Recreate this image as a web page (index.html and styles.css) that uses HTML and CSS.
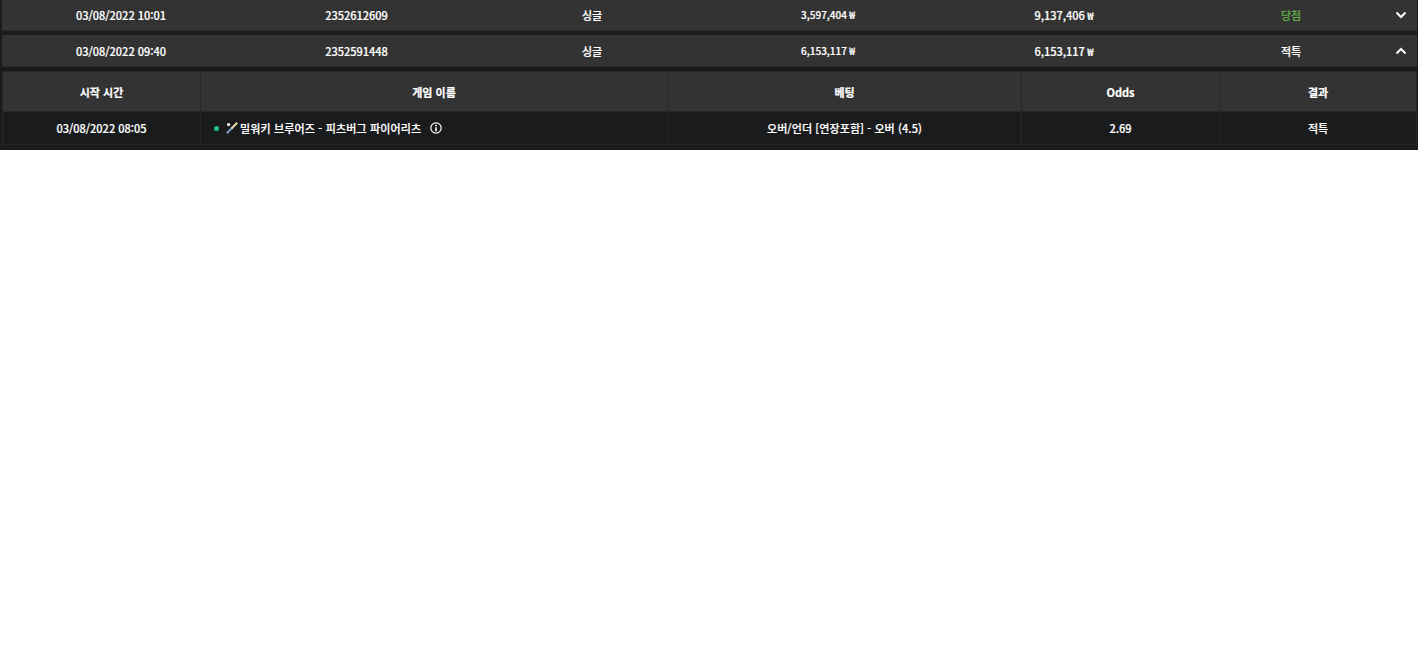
FILE: index.html
```html
<!DOCTYPE html>
<html lang="ko">
<head>
<meta charset="utf-8">
<title>베팅 내역</title>
<link rel="stylesheet" href="styles.css">
</head>
<body>
<div class="panel">
  <div class="row">
    <span class="cell">03/08/2022 10:01</span>
    <span class="cell">2352612609</span>
    <span class="cell">싱글</span>
    <span class="cell small">3,597,404 ₩</span>
    <span class="cell">9,137,406 ₩</span>
    <span class="cell win">당첨</span>
    <svg class="chev" width="12" height="8" viewBox="0 0 12 8"><path d="M1.5 1.5L6 6l4.5-4.5" fill="none" stroke="#fff" stroke-width="2"/></svg>
  </div>
  <div class="row">
    <span class="cell">03/08/2022 09:40</span>
    <span class="cell">2352591448</span>
    <span class="cell">싱글</span>
    <span class="cell small">6,153,117 ₩</span>
    <span class="cell">6,153,117 ₩</span>
    <span class="cell">적특</span>
    <svg class="chev" width="12" height="8" viewBox="0 0 12 8"><path d="M1.5 6.5L6 2l4.5 4.5" fill="none" stroke="#fff" stroke-width="2"/></svg>
  </div>
  <div class="detail">
    <div class="dhead">시작 시간</div>
    <div class="dhead">게임 이름</div>
    <div class="dhead">베팅</div>
    <div class="dhead">Odds</div>
    <div class="dhead">결과</div>
    <div class="dcell">03/08/2022 08:05</div>
    <div class="dcell game">
      <span class="dot"></span>
      <svg class="bat" width="12" height="12" viewBox="0 0 12 12"><path d="M0.8 11.2L6.5 5.5" stroke="#7d9cbc" stroke-width="2.2"/><path d="M5.5 6.5L11.2 0.8" stroke="#e8d9b0" stroke-width="2"/><circle cx="2.6" cy="2.6" r="1.7" fill="#e9e9e9"/></svg>
      <span class="gname">밀워키 브루어즈 - 피츠버그 파이어리츠</span>
      <svg class="info" width="12" height="12" viewBox="0 0 12 12"><circle cx="6" cy="6" r="5.2" fill="none" stroke="#fff" stroke-width="1.2"/><path d="M6 5.2V9.2" stroke="#fff" stroke-width="1.6"/><path d="M6 2.8v1.4" stroke="#fff" stroke-width="1.6"/></svg>
    </div>
    <div class="dcell wide">오버/언더 [연장포함] - 오버 (4.5)</div>
    <div class="dcell">2.69</div>
    <div class="dcell">적특</div>
  </div>
</div>
</body>
</html>
```
FILE: styles.css
```css
* { box-sizing: border-box; }
html, body { margin: 0; padding: 0; background: #fff; }
body {
  font-family: "Noto Sans CJK KR", "Noto Sans", sans-serif;
  font-size: 11px;
  font-weight: 500;
  color: #fff;
  -webkit-text-stroke: 0.2px currentColor;
}
.panel {
  height: 150px;
  background: #1a1b1d;
  padding: 0 1px 0 2px;
  overflow: hidden;
}
.row {
  height: 32px;
  margin-bottom: 4px;
  padding: 1px 1px 0;
  background: #333;
  border-bottom: 1px solid #2a2a2b;
  display: grid;
  grid-template-columns: 236px 235px 236px 236px 236px 218px 1fr;
  align-items: center;
  text-align: center;
  line-height: 30px;
}
.row:first-child { margin-top: -1px; }
.cell { display: block; }
.small { font-size: 10px; }
.win { color: #5fa845; }
.chev { justify-self: start; margin-left: -5px; margin-top: -1px; }
.detail {
  display: grid;
  grid-template-columns: 198px 467px 354px 198px 197px;
  grid-template-rows: 41px 33px;
  padding-left: 1px;
  background: #262728;
  text-align: center;
}
.dhead, .dcell {
  display: flex;
  align-items: center;
  justify-content: center;
  border-right: 1px solid #262728;
  border-bottom: 1px solid #262728;
}
.dhead { background: #333; border-top: 1px solid #262728; font-weight: 700; }
.dcell { background: #1a1b1d; }
.game { justify-content: flex-start; padding-left: 13px; }
.dot { width: 5px; height: 5px; border-radius: 50%; background: #20c184; margin-right: 7px; }
.bat { margin-right: 2px; }
.gname { letter-spacing: 0.15px; }
.wide { letter-spacing: 0.08px; }
.info { margin-left: 9px; }
```
